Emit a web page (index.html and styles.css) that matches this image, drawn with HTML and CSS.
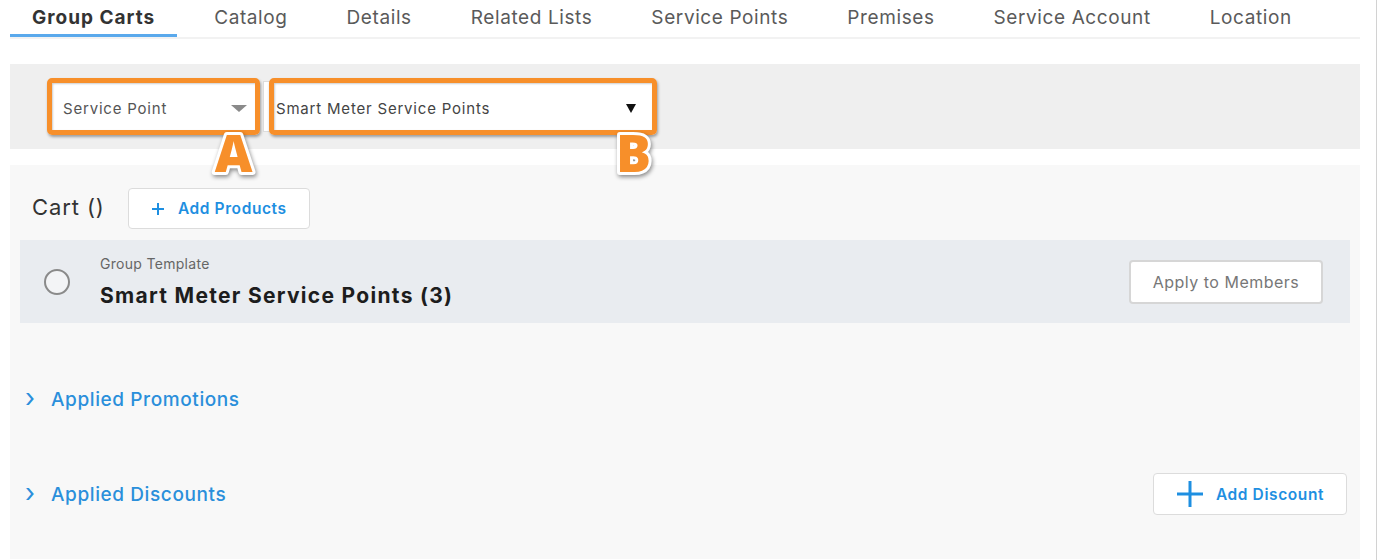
FILE: index.html
```html
<!DOCTYPE html>
<html>

<head>
    <title>Group Carts</title>
    <link rel="stylesheet" href="styles.css">
</head>

<body>
    <div class="page">
        <nav class="tabs">
            <a href="#" class="tab active">Group Carts</a>
            <a href="#" class="tab">Catalog</a>
            <a href="#" class="tab">Details</a>
            <a href="#" class="tab">Related Lists</a>
            <a href="#" class="tab">Service Points</a>
            <a href="#" class="tab">Premises</a>
            <a href="#" class="tab">Service Account</a>
            <a href="#" class="tab">Location</a>
        </nav>

        <div class="filters">
            <div class="picker picker-type">
                <span class="picker-label">Service Point</span>
                <span class="caret caret-muted"></span>
                <div class="callout"></div>
                <svg class="callout-letter" width="60" height="56" viewBox="0 0 60 56">
                    <text x="30" y="46">A</text>
                </svg>
            </div>
            <div class="picker picker-group">
                <span class="picker-label">Smart Meter Service Points</span>
                <span class="caret"></span>
                <div class="callout"></div>
                <svg class="callout-letter" width="60" height="56" viewBox="0 0 60 56">
                    <text x="30" y="46">B</text>
                </svg>
            </div>
        </div>

        <section class="cart">
            <div class="cart-header">
                <h2 class="cart-title">Cart ()</h2>
                <button class="btn btn-link">
                    <svg width="14" height="14" viewBox="0 0 14 14"><path d="M7 1v12M1 7h12" stroke="#1e8fe1" stroke-width="2" /></svg>
                    Add Products
                </button>
            </div>

            <div class="group-row">
                <span class="radio"></span>
                <div class="group-info">
                    <div class="group-kicker">Group Template</div>
                    <div class="group-name">Smart Meter Service Points (3)</div>
                </div>
                <button class="btn btn-neutral">Apply to Members</button>
            </div>

            <div class="expander promotions">
                <span class="chevron">&#x203A;</span>
                <a href="#">Applied Promotions</a>
            </div>

            <div class="expander discounts">
                <span class="chevron">&#x203A;</span>
                <a href="#">Applied Discounts</a>
                <button class="btn btn-link btn-discount">
                    <svg width="28" height="28" viewBox="0 0 28 28"><path d="M14 1v26M1 14h26" stroke="#1e8fe1" stroke-width="3" /></svg>
                    Add Discount
                </button>
            </div>
        </section>
    </div>
</body>

</html>
```

FILE: styles.css
```css
body {
    margin: 0;
    padding: 0;
    background: #fff;
    font-family: Inter, "Open Sans", sans-serif;
    color: #333;
}

.page {
    width: 1377px;
    min-height: 560px;
    box-sizing: border-box;
    padding: 0 16px 0 10px;
    border-right: 1px solid #d2d2d2;
}

/* tab strip */
.tabs {
    display: flex;
    gap: 15px;
    border-bottom: 2px solid #f2f2f2;
}

.tab {
    display: block;
    height: 34px;
    line-height: 36px;
    padding: 0 22px;
    font-size: 19px;
    letter-spacing: 0.6px;
    color: #5a5a5a;
    text-decoration: none;
    border-bottom: 3px solid transparent;
}

.tab.active {
    color: #333;
    font-weight: 700;
    letter-spacing: 1px;
    border-bottom-color: #5aa9ec;
}

/* filter bar */
.filters {
    display: flex;
    gap: 6px;
    height: 85px;
    box-sizing: border-box;
    margin-top: 25px;
    padding: 17px 0 0 40px;
    background-color: #efefef;
}

.picker {
    position: relative;
    display: flex;
    align-items: center;
    justify-content: space-between;
    height: 51px;
    box-sizing: border-box;
    padding-top: 3px;
    background: #fff;
    border: 1px solid #dcdcdc;
    font-size: 15px;
    letter-spacing: 0.8px;
    color: #555;
}

.picker-type {
    width: 207px;
    padding-left: 12px;
    padding-right: 9px;
}

.picker-group {
    width: 391px;
    padding-left: 12px;
    padding-right: 17px;
    color: #444;
}

.caret {
    width: 0;
    height: 0;
    border-left: 5px solid transparent;
    border-right: 5px solid transparent;
    border-top: 9px solid #111;
}

.caret-muted {
    border-left-width: 8px;
    border-right-width: 8px;
    border-top: 7px solid #8a8a8a;
}

/* annotation frames drawn over the pickers */
.callout {
    position: absolute;
    top: -4px;
    bottom: -4px;
    left: -4px;
    right: -4px;
    border: 5px solid #f78f2a;
    border-radius: 5px;
    box-shadow: 1px 2px 3px rgba(0, 0, 0, 0.35), inset 1px 1px 2px rgba(0, 0, 0, 0.2);
}

.picker-group .callout {
    left: 5px;
}

.callout-letter {
    position: absolute;
    top: 44px;
    left: 153px;
    overflow: visible;
    filter: drop-shadow(1px 2px 2px rgba(0, 0, 0, 0.45));
}

.picker-group .callout-letter {
    left: 340px;
}

.callout-letter text {
    font-family: "Open Sans", sans-serif;
    font-size: 52px;
    font-weight: 800;
    fill: #f78f2a;
    stroke: #fff;
    stroke-width: 6px;
    stroke-linejoin: round;
    paint-order: stroke;
    text-anchor: middle;
}

/* cart */
.cart {
    margin-top: 16px;
    padding: 23px 0 44px;
    background-color: #f8f8f8;
}

.cart-header {
    display: flex;
    align-items: center;
    gap: 23px;
    padding-left: 22px;
}

.cart-title {
    margin: -4px 0 0;
    font-size: 22px;
    font-weight: 400;
    letter-spacing: 0.9px;
    color: #333;
}

.btn {
    display: flex;
    align-items: center;
    justify-content: center;
    background: #fff;
    border: 1px solid #dcdcdc;
    border-radius: 4px;
    font-family: Inter, "Open Sans", sans-serif;
    cursor: pointer;
}

.btn-link {
    width: 182px;
    height: 41px;
    gap: 13px;
    font-size: 15.5px;
    font-weight: 600;
    letter-spacing: 0.6px;
    color: #1e8fe1;
}

.group-row {
    display: flex;
    align-items: center;
    height: 83px;
    margin: 11px 10px 0;
    padding: 0 27px 0 24px;
    background-color: #e9ecf0;
}

.radio {
    width: 22px;
    height: 22px;
    border: 2px solid #8a8a8a;
    border-radius: 50%;
    background: #f3f4f6;
}

.group-info {
    flex: 1;
    margin-left: 30px;
    margin-top: 0;
}

.group-kicker {
    font-size: 14px;
    letter-spacing: 0.3px;
    color: #666;
}

.group-name {
    margin-top: 11px;
    font-size: 21px;
    font-weight: 700;
    letter-spacing: 1.3px;
    color: #1d1d1d;
}

.btn-neutral {
    width: 194px;
    height: 44px;
    border: 2px solid #d6d6d6;
    font-size: 16px;
    letter-spacing: 0.5px;
    color: #777;
}

.expander {
    display: flex;
    align-items: center;
    height: 42px;
    padding: 0 13px 0 15px;
}

.expander a {
    font-size: 19px;
    font-weight: 500;
    letter-spacing: 0.6px;
    color: #2a8fdb;
    text-decoration: none;
}

.chevron {
    width: 26px;
    font-size: 26px;
    line-height: 1;
    margin-top: -3px;
    color: #2a8fdb;
}

.promotions {
    margin-top: 55px;
}

.discounts {
    margin-top: 53px;
}

.btn-discount {
    margin-left: auto;
    width: 194px;
    height: 42px;
    gap: 12px;
}
```
